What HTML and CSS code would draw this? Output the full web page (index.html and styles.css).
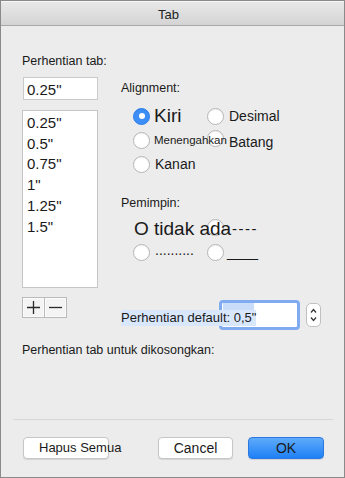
FILE: index.html
```html
<!DOCTYPE html>
<html lang="id">
<head>
    <meta charset="UTF-8">
    <title>Tab</title>
    <link rel="stylesheet" href="styles.css">
</head>
<body>
    <div class="window">
        <div class="titlebar">Tab</div>
        <div class="body">
            <div class="columns">
                <div class="stops">
                    <div class="label">Perhentian tab:</div>
                    <div class="stop-field">0.25"</div>
                    <ul class="stop-list">
                        <li>0.25"</li>
                        <li>0.5"</li>
                        <li>0.75"</li>
                        <li>1"</li>
                        <li>1.25"</li>
                        <li>1.5"</li>
                    </ul>
                    <div class="add-remove">
                        <span class="seg">
                            <svg width="13" height="13" viewBox="0 0 13 13"><path d="M6.5 0v13M0 6.5h13" stroke="#2a2a2a" stroke-width="1.3"/></svg>
                        </span>
                        <span class="seg">
                            <svg width="13" height="13" viewBox="0 0 13 13"><path d="M0 6.5h13" stroke="#2a2a2a" stroke-width="1.3"/></svg>
                        </span>
                    </div>
                </div>

                <div class="options">
                    <div class="label">Alignment:</div>
                    <div class="radio-grid">
                        <div class="opt opt-big"><span class="radio checked"></span><span class="txt">Kiri</span></div>
                        <div class="opt"><span class="radio"></span><span class="txt">Desimal</span></div>
                        <div class="opt opt-small"><span class="radio"></span><span class="txt">Menengahkan</span></div>
                        <div class="opt opt-batang"><span class="radio"></span><span class="txt">Batang</span></div>
                        <div class="opt"><span class="radio"></span><span class="txt">Kanan</span></div>
                    </div>

                    <div class="label leader-label">Pemimpin:</div>
                    <div class="radio-grid leaders">
                        <div class="opt"><span class="none-text">O tidak ada</span></div>
                        <div class="opt opt-dash"><span class="radio"></span><span class="txt dashes">----</span></div>
                        <div class="opt"><span class="radio"></span><span class="txt dots">..........</span></div>
                        <div class="opt opt-line"><span class="radio"></span><span class="txt">____</span></div>
                    </div>

                    <div class="default-row">
                        <span class="default-label">Perhentian default: 0,5"</span>
                        <span class="default-field"><span class="sel"></span></span>
                        <span class="stepper">
                            <svg width="13" height="22" viewBox="0 0 13 22"><path d="M4 8.5l2.5-3 2.5 3M4 13.5l2.5 3 2.5-3" fill="none" stroke="#333" stroke-width="1.2"/></svg>
                        </span>
                    </div>
                </div>
            </div>

            <div class="label clear-label">Perhentian tab untuk dikosongkan:</div>

            <div class="footer">
                <div class="separator"></div>
                <div class="buttons">
                    <div class="btn btn-clear">Hapus Semua</div>
                    <div class="btn btn-cancel">Cancel</div>
                    <div class="btn btn-ok">OK</div>
                </div>
            </div>
        </div>
    </div>
</body>
</html>
```

FILE: styles.css
```css
body {
    margin: 0;
    font-family: "Liberation Sans", Arial, sans-serif;
    color: #1a1a1a;
    background: #ececec;
}
.window {
    width: 345px;
    height: 478px;
    box-sizing: border-box;
    border: 1px solid #8a8a8a;
    display: flex;
    flex-direction: column;
    background: #ececec;
}
.titlebar {
    height: 24px;
    border-bottom: 1px solid #a8a8a8;
    background: linear-gradient(#e9e9e9, #d4d4d4);
    box-shadow: inset 0 1px 0 #f7f7f7;
    text-align: center;
    font-size: 13px;
    line-height: 27px;
    padding-right: 8px;
    color: #222;
}
.body {
    flex: 1;
    display: flex;
    flex-direction: column;
    padding: 27px 20px 18px 21px;
}
.columns {
    display: flex;
    gap: 23px;
}
.label {
    font-size: 12.5px;
    line-height: 16px;
    white-space: nowrap;
}

/* left column */
.stops {
    width: 76px;
}
.stop-field {
    margin: 8px 0 0 1px;
    width: 75px;
    height: 23px;
    box-sizing: border-box;
    border: 1px solid #cacaca;
    background: #fff;
    font-size: 15px;
    line-height: 23px;
    padding-left: 3px;
}
.stop-list {
    list-style: none;
    margin: 10px 0 0;
    height: 178px;
    box-sizing: border-box;
    border: 1px solid #c6c6c6;
    background: #fff;
    padding: 2px 0 0 4px;
    font-size: 15px;
}
.stop-list li {
    line-height: 20.7px;
}
.add-remove {
    display: flex;
    margin-top: 9px;
}
.seg {
    width: 23px;
    height: 21px;
    box-sizing: border-box;
    border: 1px solid #bababa;
    background: #f4f4f4;
    box-shadow: inset 0 0 0 1px #fbfbfb;
    display: flex;
    align-items: center;
    justify-content: center;
}
.seg + .seg {
    margin-left: -1px;
}

/* right column */
.options {
    flex: 1;
    padding-top: 27px;
}
.radio-grid {
    display: grid;
    grid-template-columns: 74px auto;
    grid-auto-rows: 24px;
    margin: 8px 0 0 12px;
}
.opt {
    display: flex;
    align-items: center;
    gap: 5px;
    white-space: nowrap;
    font-size: 14px;
}
.txt {
    position: relative;
    z-index: 1;
}
.radio {
    flex: none;
    width: 17px;
    height: 17px;
    box-sizing: border-box;
    border: 1px solid #b5b5b5;
    border-radius: 50%;
    background: #fff;
    box-shadow: inset 0 1px 1px rgba(0,0,0,0.05);
    display: flex;
    align-items: center;
    justify-content: center;
}
.radio.checked {
    background: #3d8ff7;
    border-color: #2e7fe8;
}
.radio.checked::after {
    content: "";
    width: 6px;
    height: 6px;
    border-radius: 50%;
    background: #fff;
}
.opt-big {
    font-size: 19px;
    gap: 4px;
}
.opt-small {
    font-size: 11.5px;
    gap: 4px;
}
.opt-batang {
    padding-top: 4px;
}
.opt-batang .radio {
    margin-top: -7px;
}

.leader-label {
    margin-top: 19px;
}
.leaders {
    margin-top: 5px;
}
.none-text {
    position: relative;
    z-index: 1;
    font-size: 19px;
    padding-left: 1px;
    margin-top: 2px;
}
.opt-dash {
    gap: 8px;
}
.opt-dash .radio {
    margin-top: -2px;
}
.dashes {
    font-size: 15px;
    letter-spacing: 1.5px;
}
.dots {
    margin-top: -4px;
}
.opt-line {
    gap: 3px;
}

.default-row {
    display: flex;
    align-items: center;
    margin-top: 36px;
}
.default-label {
    position: relative;
    z-index: 1;
    font-size: 13px;
    line-height: 16px;
    margin-top: 5px;
    background: #d8e7fc;
    white-space: nowrap;
}
.default-field {
    width: 81px;
    height: 30px;
    box-sizing: border-box;
    margin-left: -37px;
    border: 3px solid #80abf1;
    border-radius: 4px;
    background: #fff;
    display: block;
}
.sel {
    display: block;
    width: 31px;
    height: 15px;
    margin: 0 0 0 1px;
    background: #c9ddfb;
}
.stepper {
    margin-left: 6px;
    width: 15px;
    height: 24px;
    box-sizing: border-box;
    border: 1px solid #c0c0c0;
    border-radius: 5px;
    background: #fff;
    display: flex;
    align-items: center;
    justify-content: center;
}

.clear-label {
    margin-top: 12px;
}

/* footer */
.footer {
    margin-top: auto;
}
.separator {
    height: 1px;
    background: #d6d6d6;
    margin: 0 -9px;
}
.buttons {
    display: flex;
    gap: 15px;
    margin-top: 17px;
}
.btn {
    height: 22px;
    box-sizing: border-box;
    border: 1px solid #c6c6c6;
    border-radius: 4px;
    background: #fff;
    box-shadow: 0 1px 1px rgba(0,0,0,0.1);
    font-size: 14px;
    line-height: 20px;
    text-align: center;
    white-space: nowrap;
}
.btn-clear {
    width: 86px;
    margin-left: 1px;
    margin-right: auto;
    text-align: left;
    padding-left: 15px;
    font-size: 13px;
}
.btn-cancel {
    width: 75px;
}
.btn-ok {
    width: 76px;
    background: linear-gradient(#5eabfa, #1f80f6);
    border-color: #2b78e2;
    color: #1a1a1a;
}
```
